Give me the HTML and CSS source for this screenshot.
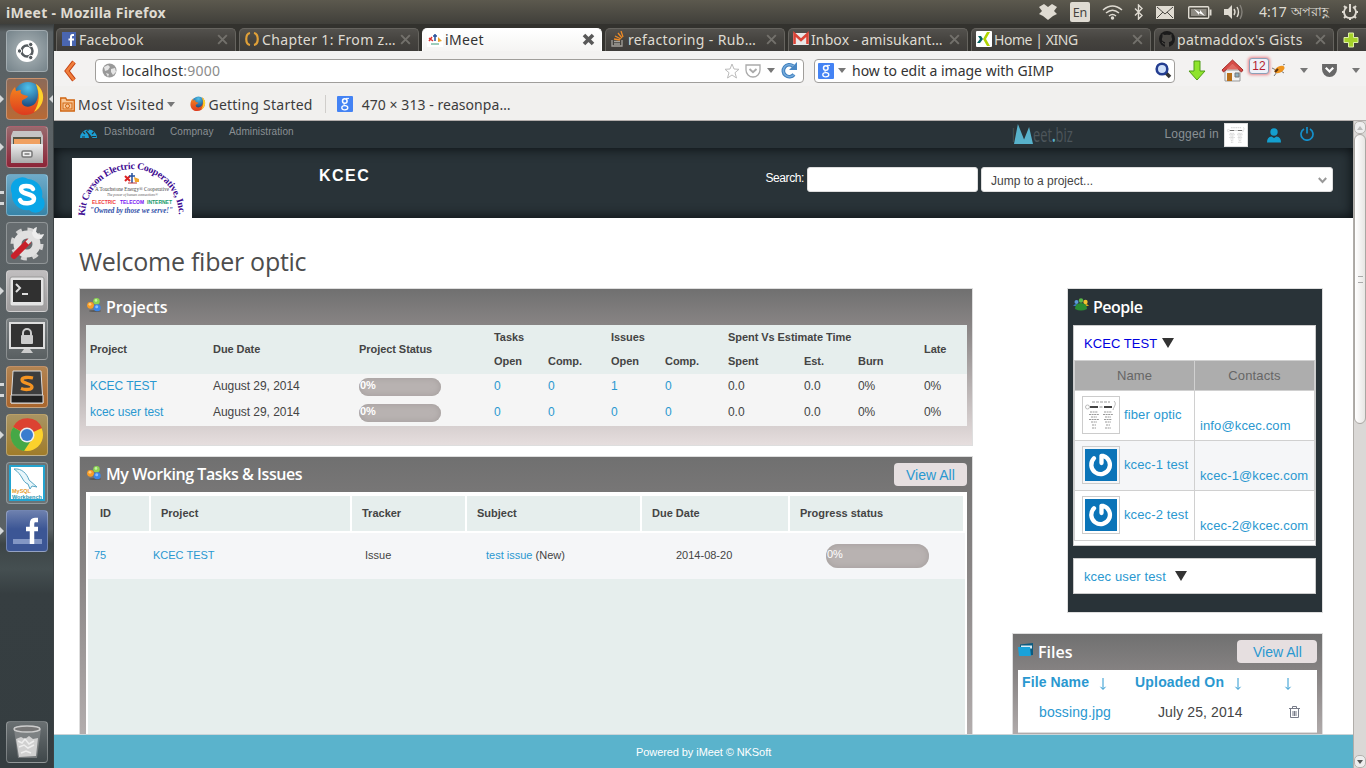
FILE: index.html
```html
<!DOCTYPE html>
<html lang="en">
<head>
<meta charset="utf-8">
<title>iMeet</title>
<link rel="stylesheet" href="styles.css">
</head>
<body>
<svg width="0" height="0" class="defs">
  <defs>
    <linearGradient id="silver" x2="0" y2="1"><stop offset="0" stop-color="#eee"/><stop offset="1" stop-color="#aaa"/></linearGradient>
    <linearGradient id="fire" x2="0" y2="1"><stop offset="0" stop-color="#f58b1f"/><stop offset="1" stop-color="#dd3b1e"/></linearGradient>
    <radialGradient id="globe" cx=".5" cy=".2" r=".8"><stop offset="0" stop-color="#4fc1ea"/><stop offset="1" stop-color="#14366e"/></radialGradient>
    <symbol id="firefox" viewBox="0 0 36 36">
      <circle cx="19" cy="15" r="14" fill="url(#globe)"/>
      <path d="M27 3c6 4 9 12 6 19-3 8-10 12-17 12C7 34 1 27 1 19 1 13 3 9 6 6l1 4 5-1c-1 3 0 4 3 5l4 1c-1 3-5 3-6 5-1 4 4 7 9 5 7-2 9-12 5-22z" fill="url(#fire)"/>
      <path d="M27 3c6 4 9 12 6 19-2 4-4 7-8 9 6-9 6-19 2-28z" fill="#fdd22b"/>
    </symbol>
    <symbol id="balls" viewBox="0 0 14 14">
      <ellipse cx="8" cy="13" rx="6" ry="1" fill="#444" opacity=".6"/>
      <circle cx="9.5" cy="3.3" r="3.2" fill="#8bd653"/><circle cx="3.5" cy="7.3" r="3.4" fill="#f99d26"/><circle cx="10.2" cy="9.8" r="3.5" fill="#3a86e8"/>
      <circle cx="9" cy="2.4" r="1.3" fill="#c7f2a4"/><circle cx="3" cy="6.3" r="1.4" fill="#ffcf80"/><circle cx="9.7" cy="8.8" r="1.5" fill="#8fbffb"/>
    </symbol>
    <symbol id="gravatar" viewBox="0 0 32 32">
      <rect width="32" height="32" fill="#0b74b8"/>
      <path d="M9 9.300A9.300 9.300 0 1 0 18.500 7L16.500 6.800V14" fill="none" stroke="#fff" stroke-width="4.300" stroke-linecap="round" stroke-linejoin="round"/>
    </symbol>
    <symbol id="paper" viewBox="0 0 32 32">
      <rect width="32" height="32" fill="#fff"/>
      <path d="M7 3h18" stroke="#999" stroke-width="1" stroke-dasharray="3 1"/>
      <path d="M5 8h8M19 8h8" stroke="#444" stroke-width="2"/><path d="M14.500 8h3" stroke="#888"/>
      <circle cx="2.500" cy="8" r="2" fill="none" stroke="#bbb"/><path d="M29 2c3 3 0 5-1 9" fill="none" stroke="#bbb"/>
      <path d="M5 13h8M19 13h8M4 15.500h10M18 15.500h10M6 18h6M20 18h6M4 20.500h10M19 20.500h8M6 23h6M20 23h6M7 26h4M21 26h4M7 29h4M20 29h6" stroke="#999" stroke-width="1" stroke-dasharray="2 .6"/>
    </symbol>
    <symbol id="close" viewBox="0 0 12 12"><path d="M2 2l8 8M10 2l-8 8" stroke="#73716c" stroke-width="1.800"/></symbol>
    <symbol id="gbox" viewBox="0 0 16 16"><rect width="16" height="16" rx="1" fill="#4483f4"/><circle cx="7.800" cy="5" r="2.300" fill="none" stroke="#fff" stroke-width="1.500"/><ellipse cx="7.800" cy="11.800" rx="3" ry="2.100" fill="none" stroke="#fff" stroke-width="1.300"/><path d="M9 2.400h3M7 7.500c-1 2 2 1.500 2.500 3" stroke="#fff" fill="none"/></symbol>
    <symbol id="pocket" viewBox="0 0 16 14"><path d="M1 1h14v5a7 7 0 0 1-14 0z" fill="none" stroke="currentColor" stroke-width="1.300"/><path d="M4.500 5L8 8.300 11.500 5" fill="none" stroke="currentColor" stroke-width="1.900"/></symbol>
  </defs>
</svg>

<header class="panel-bar">
  <span class="window-title">iMeet - Mozilla Firefox</span>
  <div class="indicators">
    <svg class="i-drop" width="18" height="16" viewBox="0 0 18 16"><path d="M5 0l4 3 4-3 5 3-3 4 3 3-4 2-5 4-5-4-4-2 3-3-3-4z" fill="#dfdbd2"/></svg>
    <span class="lang">En</span>
    <svg class="i-wifi" width="21" height="15" viewBox="0 0 21 15" fill="none" stroke="#dfdbd2" stroke-width="1.500"><path d="M1 5q9.500-8 19 0M4 8q6.500-5.500 13 0M7 11q3.500-3 7 0"/><circle cx="10.500" cy="13" r="1" fill="#dfdbd2"/></svg>
    <svg class="i-bt" width="9" height="16" viewBox="0 0 9 16" fill="none" stroke="#dfdbd2" stroke-width="1.400"><path d="M1 4.500l7 7-3.500 3.500V1L8 4.500l-7 7"/></svg>
    <svg class="i-mail" width="18" height="13" viewBox="0 0 18 13"><rect width="18" height="13" fill="#dfdbd2"/><path d="M1 1l8 7 8-7M1 12l6-6M17 12l-6-6" fill="none" stroke="#4a4843"/></svg>
    <svg class="i-bat" width="24" height="13" viewBox="0 0 24 13"><rect x=".7" y=".7" width="20" height="11.500" rx="1" fill="none" stroke="#dfdbd2" stroke-width="1.400"/><rect x="3" y="3" width="15.500" height="7" fill="#8d8a82"/><path d="M22.500 3.500v6" stroke="#dfdbd2" stroke-width="2"/><path d="M6 3l6 3.500V4l5 6-6-3v2z" fill="#fff"/></svg>
    <svg class="i-vol" width="20" height="16" viewBox="0 0 20 16"><path d="M0 5h4l4-4v14l-4-4H0z" fill="#dfdbd2"/><path d="M10 5q2 3 0 6M13 3q3 5 0 10" fill="none" stroke="#dfdbd2" stroke-width="1.400"/><path d="M16 1q4 7 0 14" fill="none" stroke="#85827b" stroke-width="1.400"/></svg>
    <span class="clock">4:17 <span class="bn">অপরাহ্ণ</span></span>
    <svg class="i-gear" width="18" height="18" viewBox="0 0 18 18" fill="none" stroke="#dfdbd2"><path d="M6 4a6 6 0 1 0 6 0" stroke-width="1.800"/><path d="M9 1v8" stroke-width="2"/><path d="M1 9h2.500M14.500 9H17M3 3l2 2M15 3l-2 2M3 15l2-2M15 15l-2-2M9 14.500V17" stroke-width="2"/></svg>
  </div>
</header>

<div class="desktop">
  <nav class="launcher">
    <div class="tile t-ubuntu"><svg viewBox="0 0 42 42"><circle cx="21" cy="21" r="11" fill="#fff"/><circle cx="21" cy="21" r="5.500" fill="none" stroke="#555b5f" stroke-width="2.500"/><circle cx="13.500" cy="21" r="2.200" fill="#555b5f" stroke="#fff"/><circle cx="24.700" cy="14.500" r="2.200" fill="#555b5f" stroke="#fff"/><circle cx="24.700" cy="27.500" r="2.200" fill="#555b5f" stroke="#fff"/></svg></div>
    <div class="tile t-fox run focus"><svg viewBox="0 0 42 42"><use href="#firefox" x="3" y="3" width="36" height="36"/></svg></div>
    <div class="tile t-files run"><svg viewBox="0 0 42 42"><path d="M7 5h28l2 5v27H5V10z" fill="#c4c4c4"/><rect x="7" y="11" width="28" height="7" fill="#554"/><path d="M8 13h26v5H8z" fill="#f0a060"/><rect x="5" y="18" width="32" height="19" rx="1" fill="url(#silver)"/><rect x="16" y="25" width="10" height="6" rx="1.500" fill="#eee" stroke="#777" stroke-width="1.500"/><path d="M18.500 28h5" stroke="#777" stroke-width="1.500"/></svg></div>
    <div class="tile t-skype two"><svg viewBox="0 0 42 42"><path d="M13 4a10 10 0 0 1 9 1 15 15 0 0 1 14 18 9 9 0 0 1-13 13A15 15 0 0 1 6 20C3 13 6 6 13 4z" fill="#0aa5e6"/><path d="M27 15c-2-4-12-4-12 0 0 6 13 4 13 10 0 5-12 6-14 1" fill="none" stroke="#fff" stroke-width="4.500" stroke-linecap="round"/></svg></div>
    <div class="tile t-set"><svg viewBox="0 0 42 42"><circle cx="21" cy="22" r="14" fill="none" stroke="#d5d5d5" stroke-width="5" stroke-dasharray="5.500 5.500"/><circle cx="21" cy="22" r="9.500" fill="none" stroke="#e0e0e0" stroke-width="8"/><path d="M8 34l14-14" stroke="#c8202a" stroke-width="6" stroke-linecap="round"/><path d="M21 21L31 11" stroke="#e0e0e0" stroke-width="4"/><path d="M31 5a6 6 0 1 0 7 7l-5 1-3-3z" fill="#eee"/></svg></div>
    <div class="tile t-term run"><svg viewBox="0 0 42 42"><rect x="4" y="7" width="34" height="29" rx="2" fill="#e4e4e4" stroke="#999"/><rect x="7" y="10" width="28" height="22" fill="#303030"/><path d="M10 14l4 4-4 4M16 24h6" fill="none" stroke="#ddd" stroke-width="2"/></svg></div>
    <div class="tile t-lock"><svg viewBox="0 0 42 42"><rect x="4" y="5" width="34" height="25" fill="#333" stroke="#ddd" stroke-width="2"/><path d="M18 31h6l3 4H15z" fill="#ccc"/><rect x="15" y="17" width="12" height="9" rx="1" fill="#ccc"/><path d="M17 18v-3a4 4 0 0 1 8 0v3" fill="none" stroke="#ccc" stroke-width="2"/></svg></div>
    <div class="tile t-sub two"><svg viewBox="0 0 42 42"><path d="M7 5h28l2 32H5z" fill="#3d3d3d" stroke="#ddd"/><path d="M5 29h32v8H5z" fill="#202020" stroke="#ddd"/><path d="M27 12c-4-1-11-1-11 2 0 4 10 3 10 7 0 3-7 3-11 1.500" fill="none" stroke="#f59422" stroke-width="3.300"/></svg></div>
    <div class="tile t-chrome run"><svg viewBox="0 0 42 42"><circle cx="21" cy="21" r="16" fill="#fbd12c"/><path d="M21 21L7 13A16 16 0 0 1 36 14z" fill="#dc4232"/><path d="M21 21L7 13a16 16 0 0 0 11 24l8-12z" fill="#45a846"/><circle cx="21" cy="21" r="7.500" fill="#eee"/><circle cx="21" cy="21" r="6" fill="#3a7cce"/></svg></div>
    <div class="tile t-sql"><svg viewBox="0 0 42 42"><rect x="4" y="4" width="34" height="34" fill="#fff" stroke="#23a3cf" stroke-width="2"/><path d="M8 7c8-1 13 5 15 11l8 7-5-1-2 3-2-5c-6-2-5-9-14-15z" fill="#e8f6fb" stroke="#58a6c4"/><text x="6" y="31" class="sqltxt" fill="#e69b2e">MySQL</text><text x="6" y="36.500" class="sqltxt" fill="#2795b5">Workbench</text></svg></div>
    <div class="tile t-fb run"><svg viewBox="0 0 42 42"><path d="M7 29h29v5H7z" fill="#8296c4"/><path d="M32 10h-3q-3 0-3 4v20M20 19h12" fill="none" stroke="#fff" stroke-width="4.500"/></svg></div>
    <div class="tile t-trash"><svg viewBox="0 0 42 42"><path d="M8 8h27l-4 29H12z" fill="#8b8f90" opacity=".7"/><ellipse cx="21" cy="8" rx="13" ry="3" fill="#777" stroke="#ccc" stroke-width="1.500"/><path d="M10 18l5-2 4 2 4-3 4 3 5-1-2 18-17 1z" fill="#d0d0d0"/><path d="M12 20l4 2 3-4 4 5 5-3M13 26l5-2 4 3 6-3M15 32l5-2 5 2" fill="none" stroke="#eee" stroke-width="1.500"/></svg></div>
  </nav>

  <main class="browser">
    <div class="tabs">
      <div class="tab"><svg class="fav" viewBox="0 0 16 16"><rect width="14" height="14" x="1" y="1" fill="#4a66b0"/><path d="M13 4h-1.500Q10 4 10 6v9M7.500 8.500H13" fill="none" stroke="#fff" stroke-width="2"/></svg><span class="w1">Facebook</span><svg class="x"><use href="#close"/></svg></div>
      <div class="tab"><svg class="fav" viewBox="0 0 16 16"><path d="M6 2C1 3 1 13 6 14M10 2c5 1 5 11 0 12" fill="none" stroke="#e0a038" stroke-width="2.200"/></svg><span class="w2">Chapter 1: From z…</span><svg class="x"><use href="#close"/></svg></div>
      <div class="tab active"><svg class="fav" viewBox="0 0 16 16"><rect width="16" height="16" fill="#fff"/><path d="M8 3v7M6 5h4" stroke="#24509c" stroke-width="1.500"/><path d="M2 7l4 3M5 6l-3 4" stroke="#d33" stroke-width="1.500"/><path d="M11 6l4 4-4 1z" fill="#eaa32b"/><path d="M4 13h8" stroke="#3a9c7a"/></svg><span class="w3">iMeet</span><svg class="x"><path d="M2 2l9 9M11 2l-9 9" stroke="#595959" stroke-width="3.600"/></svg></div>
      <div class="tab"><svg class="fav" viewBox="0 0 16 16"><path d="M2 9v6h10V9M4 13h6M4 10.500h6" fill="none" stroke="#a5a29c" stroke-width="1.300"/><path d="M4 8l6 1M5 5l6 3M8 2l4 5M11 0l2 6" stroke="#ee8b26" stroke-width="1.300"/></svg><span class="w4">refactoring - Rub…</span><svg class="x"><use href="#close"/></svg></div>
      <div class="tab"><svg class="fav" viewBox="0 0 16 16"><rect y="2" width="16" height="12" rx="1" fill="#e8e8e8"/><path d="M1.500 13V3L8 9l6.500-6v10" fill="none" stroke="#db4437" stroke-width="2.600"/></svg><span class="w5">Inbox - amisukant…</span><svg class="x"><use href="#close"/></svg></div>
      <div class="tab"><svg class="fav" viewBox="0 0 16 16"><rect width="16" height="16" rx="1" fill="#fff"/><path d="M2 5h3l2 3-3 4H1l3-4z" fill="#066464"/><path d="M11 1h3L10 8l4 7h-3L7 8z" fill="#b0d400"/></svg><span class="w6">Home | XING</span><svg class="x"><use href="#close"/></svg></div>
      <div class="tab"><svg class="fav" viewBox="0 0 16 16"><circle cx="8" cy="8" r="8" fill="#1b1b1b"/><path d="M3.500 3l2 1q2.500-.7 5 0l2-1v3q2 4-2 5-2.500.6-5 0-4-1-2-5zM6 11h4v5H6z" fill="#4b4945"/><path d="M3 11q2 3 3 2" stroke="#4b4945" fill="none"/></svg><span class="w7">patmaddox's Gists</span><svg class="x"><use href="#close"/></svg></div>
      <div class="tab plus"><svg width="16" height="16" viewBox="0 0 16 16"><path d="M5.500 1h5v4.500H15v5h-4.500V15h-5v-4.500H1v-5h4.500z" fill="#a5d12b" stroke="#dff0a5"/></svg></div>
    </div>
    <div class="toolbar">
      <svg class="back" width="14" height="22" viewBox="0 0 14 22"><path d="M11 2L4 11l7 9" fill="none" stroke="#c34113" stroke-width="4.500"/><path d="M11 2L4 11l7 9" fill="none" stroke="#f07f3c" stroke-width="2.800"/></svg>
      <div class="urlbar">
        <svg width="15" height="15" viewBox="0 0 15 15"><circle cx="7.500" cy="7.500" r="7" fill="#999"/><path d="M2 4l4-2 2 2-2 3-3 1zM9 6l4-1 1 4-3 3-2-3zM4 10l3 1-1 3z" fill="#e5e5e5"/></svg>
        <span class="url">localhost<i>:9000</i></span>
        <svg class="star" width="16" height="16" viewBox="0 0 16 16"><path d="M8 1l2 5 5 .3-4 3.400L12.500 15 8 12l-4.500 3L5 9.700 1 6.300 6 6z" fill="#fff" stroke="#bbb"/></svg>
        <svg class="pk" width="16" height="14" color="#aaa"><use href="#pocket"/></svg>
        <b class="caret"></b>
        <svg class="reload" width="17" height="17" viewBox="0 0 17 17"><path d="M13 12.500A6 6 0 1 1 12 4" fill="none" stroke="#3f7fbd" stroke-width="3.600"/><path d="M13 12.500A6 6 0 1 1 12 4" fill="none" stroke="#75abdc" stroke-width="1.600"/><path d="M16 0v8H8z" fill="#4a88c4"/></svg>
      </div>
      <div class="searchbar">
        <svg width="16" height="16"><use href="#gbox"/></svg><b class="caret"></b><span class="query">how to edit a image with GIMP</span>
        <svg width="17" height="17" viewBox="0 0 17 17"><path d="M11 11l4 4" stroke="#333" stroke-width="3.500"/><circle cx="7" cy="7" r="5.300" fill="#cfe0fa" stroke="#243e91" stroke-width="2.600"/></svg>
      </div>
      <svg class="dl" width="18" height="22" viewBox="0 0 18 22"><path d="M6 1h6v10h5l-8 9-8-9h5z" fill="#8fe42c" stroke="#4f9c17"/></svg>
      <svg class="home" width="23" height="23" viewBox="0 0 23 23"><path d="M4 11h15v11H4z" fill="#f2f2f2" stroke="#999"/><path d="M6 14h5v8H6z" fill="#b96f17"/><path d="M14 14h4v4h-4z" fill="#8eb0c0" stroke="#777"/><path d="M11.500 1L22 11l-1.500 2L11.500 5 2.500 13 1 11z" fill="#d94b47" stroke="#a12a26"/><path d="M5 10.500l6.500-6 6.500 6z" fill="#e06a63"/></svg>
      <span class="bugs">12</span>
      <svg class="bug" width="15" height="13" viewBox="0 0 15 13"><path d="M1 4l4 2M3 12l3-4M13 9l-3-2M12 1l2-1" stroke="#777"/><ellipse cx="8.500" cy="5.500" rx="5.500" ry="3" transform="rotate(-28 8.500 5.500)" fill="#ee941e"/><path d="M4 8l3-3" stroke="#5b3410" stroke-width="2"/></svg>
      <b class="caret c1"></b>
      <svg class="pk2" width="15" height="13" viewBox="0 0 16 14"><path d="M0 0h16v6a8 8 0 0 1-16 0z" fill="#686868"/><path d="M4 4l4 4 4-4" fill="none" stroke="#fff" stroke-width="2.400"/></svg>
      <b class="caret c2"></b>
    </div>
    <div class="bookmarks">
      <svg width="15" height="15" viewBox="0 0 15 15"><path d="M.7 14V1h5l1 2h7.600v11z" fill="#f9c898" stroke="#d06410" stroke-width="1.300"/><rect x="3" y="6" width="9" height="6" fill="none" stroke="#d06410"/><circle cx="7.500" cy="9" r="2" fill="none" stroke="#d06410"/></svg><span class="bm1">Most Visited</span><b class="caret bc"></b>
      <svg class="bf" width="16" height="16"><use href="#firefox"/></svg><span class="bm2">Getting Started</span>
      <i class="sep"></i><svg class="bg" width="16" height="16"><use href="#gbox"/></svg><span class="bm3">470 × 313 - reasonpa…</span>
    </div>

    <div class="view">
      <div class="page">
        <div class="topnav">
          <svg class="gauge" width="17" height="10" viewBox="0 0 17 10"><path d="M0 10a8.500 8.500 0 0 1 17 0h-5L8 5l1 5z" fill="#1c9fd4"/><path d="M3 4l2 2M8 1v2M14 4l-2 2M2 9h3M12 8.500h4M6 3l6 7" stroke="#293338" stroke-width="1.200"/></svg>
          <span class="n1">Dashboard</span><span class="n2">Compnay</span><span class="n3">Administration</span>
          <div class="brand"><span class="bi">I</span><svg width="19" height="20" viewBox="0 0 17 20" preserveAspectRatio="none"><path d="M0 20L3.500 0 9 15.500 13.500 3 17 20z" fill="#58b2cb"/></svg><span class="bt">eet<b>.</b>biz</span></div>
          <span class="logged">Logged in</span>
          <svg class="mini" width="24" height="24" viewBox="0 0 24 24"><rect x=".5" y=".5" width="23" height="23" fill="#fff" stroke="#ddd"/><use href="#paper" x="3" y="3" width="18" height="18" opacity=".75"/></svg>
          <svg class="user" width="14" height="15" viewBox="0 0 14 15"><circle cx="7" cy="4" r="3.700" fill="#14a0cf"/><path d="M0 14.500Q0 9 4.500 8.500L7 10l2.500-1.500Q14 9 14 14.500z" fill="#14a0cf"/></svg>
          <svg class="power" width="14" height="14" viewBox="0 0 14 14" fill="none" stroke="#1591cc" stroke-width="1.700"><path d="M4 2a6 6 0 1 0 6 0M7 0v6.500"/></svg>
        </div>
        <div class="banner">
          <svg class="logo" width="120" height="60" viewBox="0 0 120 60">
            <rect width="120" height="60" fill="#fff"/>
            <path id="arc" d="M13 58A47 47 0 0 1 107 58" fill="none"/>
            <text class="arctext" fill="#3d0a91"><textPath href="#arc" textLength="146">Kit Carson Electric Cooperative, Inc.</textPath></text>
            <path d="M53 18l5 5M58 18l-5 5" stroke="#d22" stroke-width="2"/><path d="M60 15v10M57 18h6" stroke="#24509c" stroke-width="1.500"/><path d="M62 19l5 2v3h-4z" fill="#f0a52c"/><path d="M56 25h9" stroke="#b33"/>
            <text x="23" y="32.500" textLength="74" lengthAdjust="spacingAndGlyphs" class="lg serif" fill="#444">A Touchstone Energy® Cooperative</text>
            <text x="35" y="38" textLength="51" lengthAdjust="spacingAndGlyphs" class="lg tiny" fill="#555">The power of human connections®</text>
            <text x="20" y="46" textLength="24" lengthAdjust="spacingAndGlyphs" class="lg sans" fill="#f03a3c">ELECTRIC</text>
            <text x="48" y="46" textLength="24" lengthAdjust="spacingAndGlyphs" class="lg sans" fill="#7411f4">TELECOM</text>
            <text x="75" y="46" textLength="25" lengthAdjust="spacingAndGlyphs" class="lg sans" fill="#15996b">INTERNET</text>
            <text x="18" y="55" textLength="83" lengthAdjust="spacingAndGlyphs" class="lg script" fill="#2f4fa8">"Owned by those we serve!"</text>
          </svg>
          <span class="company">KCEC</span>
          <label class="slabel">Search:</label>
          <div class="field sinput"></div>
          <div class="field jump"><span>Jump to a project...</span><svg width="9" height="7" viewBox="0 0 9 7"><path d="M.8 1L4.500 5 8.200 1" fill="none" stroke="#999" stroke-width="2"/></svg></div>
        </div>
        <h1>Welcome fiber optic</h1>
        <div class="columns">
          <div class="left">
            <section class="card projects">
              <h2><svg width="14" height="14"><use href="#balls"/></svg><span class="h-proj">Projects</span></h2>
              <div class="ptable">
                <div class="prow phead">
                  <span class="tall">Project</span><span class="tall">Due Date</span><span class="tall">Project Status</span>
                  <span class="s2">Tasks</span><span class="s2">Issues</span><span class="s3">Spent Vs Estimate Time</span><span class="tall late">Late</span>
                  <span>Open</span><span>Comp.</span><span>Open</span><span>Comp.</span><span>Spent</span><span>Est.</span><span>Burn</span>
                </div>
                <div class="prow"><a>KCEC TEST</a><span>August 29, 2014</span><span><b class="bar">0%</b></span><a>0</a><a>0</a><a>1</a><a>0</a><span>0.0</span><span>0.0</span><span>0%</span><span>0%</span></div>
                <div class="prow"><a>kcec user test</a><span>August 29, 2014</span><span><b class="bar">0%</b></span><a>0</a><a>0</a><a>0</a><a>0</a><span>0.0</span><span>0.0</span><span>0%</span><span>0%</span></div>
              </div>
            </section>
            <section class="card tasks">
              <h2><svg width="14" height="14"><use href="#balls"/></svg><span class="h-task">My Working Tasks &amp; Issues</span><a class="all">View All</a></h2>
              <div class="ttable">
                <div class="thead"><span>ID</span><span>Project</span><span>Tracker</span><span>Subject</span><span>Due Date</span><span>Progress status</span></div>
                <div class="tbody">
                  <div class="trow"><a>75</a><a>KCEC TEST</a><span>Issue</span><span><a>test issue</a> (New)</span><span>2014-08-20</span><span class="bar big">0%</span></div>
                </div>
              </div>
            </section>
          </div>
          <div class="right">
            <section class="card people">
              <h2><svg width="16" height="14" viewBox="0 0 16 14"><circle cx="3.500" cy="4" r="2" fill="#5b9bd8"/><circle cx="8" cy="2.500" r="2.200" fill="#58b848"/><circle cx="12.500" cy="4" r="2.200" fill="#f2c32f"/><path d="M0 8q3-4 6 0z" fill="#3b78c0"/><path d="M10 8q3-4 6 0z" fill="#d8a81c"/><path d="M2 11q0-6 6-6t6 6q-6 3-12 0z" fill="#2a8c33"/></svg><span class="h-people">People</span></h2>
              <div class="box">
                <div class="ptitle open"><a>KCEC TEST</a><i class="tri"></i></div>
                <div class="ctable">
                  <div class="chead">Name</div><div class="chead">Contacts</div>
                  <div class="who"><span class="av"><svg width="32" height="32"><use href="#paper"/></svg></span><a>fiber optic</a></div><div class="mail"><a>info@kcec.com</a></div>
                  <div class="who alt"><span class="av"><svg width="32" height="32"><use href="#gravatar"/></svg></span><a>kcec-1 test</a></div><div class="mail alt"><a>kcec-1@kcec.com</a></div>
                  <div class="who"><span class="av"><svg width="32" height="32"><use href="#gravatar"/></svg></span><a>kcec-2 test</a></div><div class="mail"><a>kcec-2@kcec.com</a></div>
                </div>
              </div>
              <div class="box second"><div class="ptitle"><a>kcec user test</a><i class="tri"></i></div></div>
            </section>
            <section class="card files">
              <h2><svg width="16" height="14" viewBox="0 0 16 14"><path d="M2 1.500L15 0v12L3 13z" fill="#0c5b80"/><path d="M3 2.500h11v3H3z" fill="#d8edf5"/><path d="M0 4h12l1 9H1z" fill="#19a2da"/></svg><span class="h-files">Files</span><a class="all">View All</a></h2>
              <div class="ftable">
                <b class="f1">File Name</b><svg class="arr" viewBox="0 0 8 13"><path d="M4 0v11M1.500 8.800L4 11.500 6.500 8.800" fill="none" stroke="#2a98d0"/></svg>
                <b class="f2">Uploaded On</b><svg class="arr" viewBox="0 0 8 13"><path d="M4 0v11M1.500 8.800L4 11.500 6.500 8.800" fill="none" stroke="#2a98d0"/></svg>
                <svg class="arr" viewBox="0 0 8 13"><path d="M4 0v11M1.500 8.800L4 11.500 6.500 8.800" fill="none" stroke="#2a98d0"/></svg>
              </div>
              <div class="frow"><a>bossing.jpg</a><span>July 25, 2014</span><svg width="11" height="12" viewBox="0 0 11 12"><path d="M0 2.500h11M3.500 2V.5h4V2M1.500 3v8.500h8V3M4 5v5M5.500 5v5M7 5v5" fill="none" stroke="#777b88"/></svg></div>
            </section>
          </div>
        </div>
        <footer>Powered by iMeet © NKSoft</footer>
      </div>
      <div class="scroll"><div class="sbtn up"><i></i></div><div class="thumb"><i></i></div><div class="sbtn down"><i></i></div></div>
    </div>
  </main>
</div>
</body>
</html>
```
FILE: styles.css
```css
* { box-sizing: border-box; }
body { margin: 0; width: 1366px; height: 768px; overflow: hidden; display: flex; flex-direction: column; font-family: "Liberation Sans", Arial, sans-serif; background: #fff; white-space: nowrap; }
svg { display: block; flex: none; }
i { font-style: normal; }
span, a, b, label { flex: none; }
a { color: #2a98d0; }
.defs { position: absolute; }

/* desktop panel */
.panel-bar { flex: none; height: 24px; background: linear-gradient(#5c594e, #403f3a); color: #dfdbd2; display: flex; align-items: center; justify-content: space-between; font-family: "Noto Sans", sans-serif; }
.window-title { font-weight: 700; font-size: 14px; padding-left: 6px; letter-spacing: .28px; }
.indicators { display: flex; align-items: center; padding-right: 7px; }
.lang { background: #dfdbd2; color: #45433e; width: 20px; height: 20px; border-radius: 2px; font-size: 12.500px; line-height: 21px; text-align: center; margin: 0 12px 0 13px; }
.i-bt { margin: 0 13px 0 11px; }
.i-bat { margin: 0 12px 0 14px; }
.clock { font-size: 14px; width: 70px; margin: 0 12px 0 15px; display: flex; gap: 4px; }
.bn { font-size: 13px; }

.desktop { flex: 1; display: flex; min-height: 0; }
.launcher { width: 54px; flex: none; display: flex; flex-direction: column; gap: 6px; padding: 6px 0 5px 6px; background: linear-gradient(#3b3d3c, #5b6265 8px, #5a6164 505px, #3d4547 520px, #454f51 545px, #363e41 570px, #353d40); border-right: 1px solid #3d4345; }
.tile { width: 42px; height: 42px; flex: none; border-radius: 4px; border: 1px solid rgba(255,255,255,.28); position: relative; }
.tile svg { width: 42px; height: 42px; margin: -1px; }
.t-ubuntu { background: radial-gradient(#aeb7ba, #75838a); }
.t-fox { background: linear-gradient(#8c6a58, #b96a35); }
.t-files { background: linear-gradient(#98696d, #8c2437); }
.t-skype { background: linear-gradient(#6fabc8, #3784a8); }
.t-set { background: #666c6f; }
.t-term { background: linear-gradient(#c0bebf, #9d9b9c); }
.t-lock { background: linear-gradient(#7b8082, #595f61); }
.t-sub { background: linear-gradient(#b28452, #a9652c); }
.t-chrome { background: linear-gradient(#a89463, #a07c2a); }
.t-sql { background: #6a7376; }
.t-fb { background: linear-gradient(#6d80ae, #3c5695 45%); }
.t-trash { background: linear-gradient(#6a7072, #3f474a); margin-top: auto; }
.run::before { content: ""; position: absolute; left: -7px; top: 16px; border: 4.500px solid transparent; border-left-color: #d5d8d9; border-right: 0; }
.two::before { content: ""; position: absolute; left: -7px; top: 16px; width: 4px; height: 8px; border: solid #d5d8d9; border-width: 3px 0; }
.focus::after { content: ""; position: absolute; right: -6px; top: 16px; border: 4.500px solid transparent; border-right-color: #d5d8d9; border-left: 0; }
.sqltxt { font: 700 5.500px "Liberation Sans", sans-serif; }

/* browser chrome */
.browser { flex: 1; min-width: 0; display: flex; flex-direction: column; }
.tabs, .toolbar, .bookmarks { font-family: "Noto Sans", sans-serif; font-size: 14px; }
.tabs { height: 27px; flex: none; background: #33322e; display: flex; gap: 3px; padding: 4px 0 0 2px; overflow: hidden; }
.tab { width: 180px; flex: none; height: 23px; border-radius: 5px 5px 0 0; border: 1px solid #66645f; border-bottom: 0; background: linear-gradient(#53514d, #45433f 50%, #3e3c39); color: #dfdbd2; display: flex; align-items: center; padding: 0 6px 2px 4px; gap: 2px; }
.tab span { margin-right: auto; }
.w1 { letter-spacing: .25px; } .w2 { letter-spacing: .37px; } .w3 { letter-spacing: .35px; } .w4 { letter-spacing: .35px; }
.w5 { letter-spacing: .12px; } .w6 { letter-spacing: -.45px; } .w7 { letter-spacing: .3px; }
.fav { width: 16px; height: 16px; }
.x { width: 13px; height: 13px; }
.x use { width: 12px; height: 12px; }
.tab.active { background: linear-gradient(#fff, #f5f4f3); color: #333; border-color: #fff; }
.plus { padding: 0 0 0 5px; }
.toolbar { height: 35px; flex: none; background: #f3f2f1; display: flex; align-items: center; padding-top: 4px; padding-left: 9px; color: #333; }
.urlbar, .searchbar { height: 24px; background: #fff; border: 1px solid #a09e9b; border-radius: 4px; display: flex; align-items: center; flex: none; }
.urlbar { width: 709px; margin-left: 18px; padding: 0 5px 0 6px; }
.url { margin: 0 auto 0 5px; letter-spacing: .24px; }
.url i { color: #8c8c8c; }
.caret { border: 4px solid transparent; border-top: 5px solid #777; border-bottom: 0; }
.pk { margin: 0 6px 0 5px; }
.reload { margin-left: 6px; }
.searchbar { width: 361px; margin-left: 10px; padding: 0 2px 0 3px; }
.searchbar .caret { margin: 0 6px 0 4px; }
.query { margin-right: auto; }
.dl { margin: 0 15px 0 13px; }
.bugs { border: 1px solid #8ba0b8; border-radius: 3px; background: #eef1f8; box-shadow: 0 0 3px 1px #e9848a; color: #b41d31; font: 12px/14px "Liberation Sans", sans-serif; width: 20px; height: 16px; text-align: center; margin: -9px 2px 0 5px; }
.c1 { margin: 0 14px 0 14px; }
.c2 { margin-left: 15px; }
.bookmarks { height: 35px; flex: none; background: #f1f0ee; border-bottom: 1px solid #b3aeac; color: #3c3c3c; display: flex; align-items: center; padding-left: 6px; padding-top: 2px; }
.bm1 { margin: 0 3px 0 3px; letter-spacing: .5px; }
.bm2 { letter-spacing: .24px; }
.bf { margin: 0 2px 0 15px; }
.sep { width: 1px; height: 18px; background: #d0cecb; margin: 0 11px 0 12px; }
.bm3 { margin-left: 9px; letter-spacing: .05px; }

/* page */
.view { flex: 1; display: flex; min-height: 0; }
.page { flex: 1; min-width: 0; display: flex; flex-direction: column; overflow: hidden; background: #fff; }
.topnav { flex: none; height: 27px; background: #293338; color: #8a9094; display: flex; align-items: flex-start; font-size: 10px; padding: 0 39px 0 26px; line-height: 22px; }
.gauge { margin: 7px 7px 0 0; }
.n1 { width: 66px; letter-spacing: .2px; } .n2 { width: 59px; letter-spacing: .1px; } .n3 { margin-right: auto; letter-spacing: .1px; }
.brand { display: flex; margin: 3px 92px 0 0; height: 20px; color: #4d565b; }
.bi, .bt { font: 20px/22px "Open Sans", sans-serif; transform-origin: 0 50%; }
.bi { width: 2px; transform: scaleX(.5); }
.bt { transform: scaleX(.64); width: 39px; }
.bt b { color: #58b2cb; }
.logged { font-size: 12px; line-height: 26px; margin-right: 5px; letter-spacing: .2px; }
.mini { margin: 2px 19px 0 0; }
.user { margin: 7px 19px 0 0; }
.power { margin-top: 6px; }
.banner { flex: none; height: 70px; background: #293338; box-shadow: inset 0 0 12px 1px #0b1013; padding: 10px 20px 0 18px; display: flex; align-items: flex-start; color: #fff; }
.arctext { font: 700 9.800px "Liberation Serif", serif; }
.lg.serif { font: 5.500px "Liberation Serif", serif; }
.lg.tiny { font: italic 4px "Liberation Serif", serif; }
.lg.sans { font: 700 5.600px "Liberation Sans", sans-serif; }
.lg.script { font: italic 700 7.500px "Liberation Serif", serif; }
.company { font-weight: 700; font-size: 16px; letter-spacing: 1.500px; margin: 9px auto 0 127px; }
.slabel { font-size: 12px; margin: 13px 3px 0 0; letter-spacing: -.4px; }
.field { background: #fff; border: 1px solid #ddd; border-radius: 3px; height: 25px; margin-top: 9px; }
.sinput { width: 171px; margin-right: 3px; }
.jump { width: 352px; color: #444; font-size: 12px; display: flex; align-items: center; justify-content: space-between; padding: 2px 5px 0 9px; }
h1 { margin: 27px 0 0 25px; height: 33px; flex: none; font: 25px/33px "Open Sans", sans-serif; letter-spacing: -.27px; color: #4d4d4d; }
.columns { flex: 1; min-height: 0; display: flex; align-items: flex-start; justify-content: space-between; padding: 10px 30px 0 25px; overflow: hidden; }
.card { border: 1px solid #dedede; background: linear-gradient(#707070, #8a8686 25%, #e6dede); padding: 0 5px 0 6px; }
.left { width: 894px; display: flex; flex-direction: column; gap: 10px; }
.right { display: flex; flex-direction: column; align-items: flex-end; gap: 20px; }
.projects { height: 158px; }
.tasks { height: 480px; }
h2 { margin: 0; height: 36px; display: flex; align-items: center; gap: 5px; color: #fff; font: 600 16px "Open Sans", sans-serif; padding: 0 0 1px 1px; }
h2 svg { margin-top: -3px; }
.h-proj { letter-spacing: -.1px; } .h-task { letter-spacing: -.43px; } .h-people { letter-spacing: -.5px; }
.all { background: #e6dfe0; border-radius: 4px; font: 14px/24px "Liberation Sans", sans-serif; padding-left: 12px; width: 73px; height: 23px; margin-left: auto; }
.ptable { color: #444; font-size: 12px; background: #f5f5f5; }
.prow { display: grid; grid-template-columns: 123px 146px 135px 54px 63px 54px 63px 76px 54px 66px 43px; height: 26px; align-items: center; padding: 0 0 2px 4px; letter-spacing: -.05px; }
.phead { grid-template-rows: 24px 24px; height: 49px; background: #e6eeed; font-weight: 700; font-size: 11px; letter-spacing: -.06px; padding: 0 0 0 4px; }
.tall { grid-row: 1 / 3; } .s2 { grid-column: span 2; } .s3 { grid-column: span 3; }
.late { grid-column: 11; }
.bar { display: block; width: 82px; height: 18px; border-radius: 9px; background: #b8b2b1; box-shadow: inset 0 0 6px #a39d9c; color: #fff; font-size: 11px; line-height: 15px; padding-left: 1px; margin-top: 2px; }
.ttable { background: #fff; height: 440px; padding: 4px 2px 0; font-size: 11px; color: #444; display: flex; flex-direction: column; }
.tasks h2 { height: 35px; }
.thead { display: grid; grid-template-columns: 59px 199px 113px 173px 146px 173px; gap: 2px; height: 35px; padding: 0 2px; margin-bottom: 2px; flex: none; font-weight: 700; }
.thead span { background: #e6eeed; padding-left: 10px; line-height: 35px; }
.tbody { flex: 1; background: #e6eeed; }
.trow { height: 46px; background: #f5f6f8; display: grid; grid-template-columns: 59px 212px 121px 190px 150px 103px; align-items: center; padding: 0 0 2px 6px; }
.big { width: 103px; height: 24px; border-radius: 12px; line-height: 21px; }
.people { width: 256px; height: 325px; background: #293338; padding: 0 6px 0 5px; }
.people h2, .files h2 { padding-left: 0; gap: 4px; }
.box { width: 243px; background: #fff; border: 1px solid #ccc; height: 221px; }
.second { margin-top: 12px; height: 36px; }
.ptitle { height: 34px; display: flex; align-items: center; gap: 9px; padding-left: 10px; font-size: 13px; letter-spacing: .12px; }
.open { gap: 5px; } .open a { color: #0000e0; letter-spacing: .05px; }
.tri { border: 6px solid transparent; border-top: 10px solid #333; border-bottom: 0; }
.ctable { display: grid; grid-template-columns: 120px 120px; grid-template-rows: 30px 50px 50px 50px; border-left: 1px solid #d0d0d0; border-top: 1px solid #d0d0d0; font-size: 13px; letter-spacing: .12px; }
.ctable > div { border-right: 1px solid #d0d0d0; border-bottom: 1px solid #d0d0d0; }
.chead { background: #adadad; color: #666; text-align: center; line-height: 29px; }
.who { display: flex; align-items: center; gap: 4px; padding: 0 0 2px 7px; }
.av { border: 1px solid #ccc; padding: 2px; }
.mail { display: flex; align-items: center; padding: 20px 0 0 5px; }
.alt { background: #f5f6f8; }
.files { width: 311px; height: 180px; padding: 0 5px; }
.files .all { width: 80px; padding-left: 16px; }
.ftable { background: #fff; height: 25px; display: flex; align-items: center; font-size: 14px; padding: 0 0 2px 4px; color: #2a98d0; }
.f1 { letter-spacing: .1px; } .f2 { letter-spacing: .18px; }
.arr { width: 8px; height: 13px; margin: 5px 0 0 10px; }
.f2 { margin-left: 28px; } .ftable .arr:last-child { margin-left: 42px; }
.frow { background: #fff; height: 38px; display: grid; grid-template-columns: 119px 131px 11px; align-items: center; font-size: 14px; padding: 0 0 4px 21px; color: #444; letter-spacing: .1px; border-bottom: 1px solid #ddd; }
footer { flex: none; height: 34px; background: #5ab3cc; color: #fff; font-size: 11px; line-height: 34px; padding-left: 582px; border-top: 1px solid #c9d4d8; letter-spacing: -.08px; }
.scroll { width: 13px; flex: none; background: #dad8d6; border-left: 1px solid #b0ada9; display: flex; flex-direction: column; }
.sbtn { height: 13px; background: #eee; border: 1px solid #b5b2ae; border-radius: 5px; display: flex; align-items: center; justify-content: center; }
.sbtn i { border: 3px solid transparent; }
.up i { border-bottom: 4px solid #bbb; border-top: 0; } .down i { border-top: 4px solid #555; border-bottom: 0; }
.thumb { height: 290px; border: 1px solid #aaa7a3; border-radius: 6px; background: linear-gradient(90deg, #fff, #e8e6e4); display: flex; align-items: center; justify-content: center; }
.thumb i { width: 5px; height: 7px; border: solid #aaa; border-width: 1px 0; }
.down { margin-top: auto; }
```
